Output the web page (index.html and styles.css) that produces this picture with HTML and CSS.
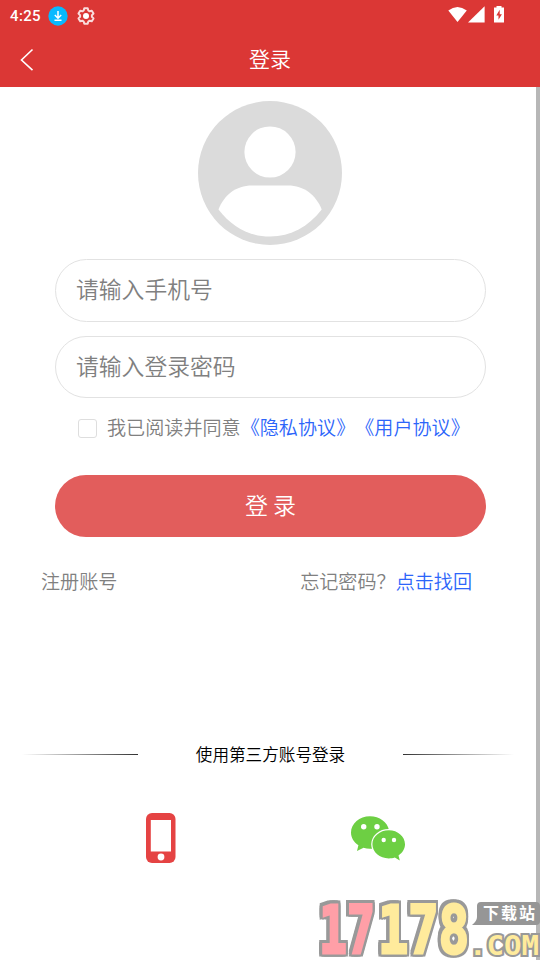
FILE: index.html
```html
<!DOCTYPE html>
<html lang="zh-CN">
<head>
<meta charset="utf-8">
<title>登录</title>
<link rel="stylesheet" href="styles.css">
</head>
<body>
<div class="screen">
  <header class="top">
    <div class="status">
      <span class="time">4:25</span>
      <svg class="download" width="20" height="20" viewBox="0 0 20 20"><circle cx="10" cy="10" r="9.700" fill="#08b9ff"/><path d="M10 5v7M6.800 9l3.200 3.200L13.200 9M6.500 14.300h7" fill="none" stroke="#fff" stroke-width="1.500"/></svg>
      <svg class="gear" width="18" height="18" viewBox="0 0 18 18"><path d="M7.300 1.300h3.400l.6 2.200 1.300.8 2.200-.6 1.700 2.900-1.600 1.600v1.600l1.600 1.600-1.700 2.900-2.200-.6-1.300.8-.6 2.200H7.300l-.6-2.200-1.300-.8-2.200.6-1.700-2.900 1.600-1.600V8.200L1.500 6.600l1.700-2.900 2.200.6 1.300-.8z" fill="none" stroke="#f9dcdc" stroke-width="2" stroke-linejoin="round"/><circle cx="9" cy="9" r="3" fill="#fff"/></svg>
      <svg class="signals" width="58" height="18" viewBox="0 0 58 18" fill="#fff"><path d="M.3 4.500Q9.500-2.500 18.800 4.500L9.500 16z"/><path d="M20 16.500 36.600.2v16.300z"/><path d="M46 1.500h2.500V0h5v1.500H56v15H46z"/><path d="M51.700 3.800 48.300 9.500h2.200v4.300l3.400-5.500h-2.200z" fill="#db3735"/></svg>
    </div>
    <div class="nav">
      <svg class="back" width="14" height="24" viewBox="0 0 14 24"><path d="M12.500 1.500 1.500 12l11 10.200" fill="none" stroke="#fff" stroke-width="1.600"/></svg>
      <h1>登录</h1>
    </div>
  </header>
  <main>
    <svg class="avatar" width="144" height="144" viewBox="0 0 144 144"><circle cx="72" cy="72" r="72" fill="#dbdbdb"/><circle cx="72" cy="51" r="25.600" fill="#fff"/><path d="M20.500 108.500C26 94 38 84.500 54 84.500h36c16 0 28 9.500 33.700 24C110 126 93 135.500 72 135.500S34 126 20.500 108.500z" fill="#fff"/></svg>
    <form class="form">
      <div class="field">请输入手机号</div>
      <div class="field second">请输入登录密码</div>
      <div class="terms"><span class="check"></span><span class="agree">我已阅读并同意<a>《隐私协议》</a><a>《用户协议》</a></span></div>
      <div class="submit">登 录</div>
    </form>
    <div class="links"><span>注册账号</span><span>忘记密码？<a>点击找回</a></span></div>
    <div class="divider"><i class="line left"></i><span>使用第三方账号登录</span><i class="line right"></i></div>
    <div class="providers">
      <svg class="phone" width="30" height="50" viewBox="0 0 30 50"><rect width="29.500" height="50" rx="6" fill="#e54343"/><path d="M4.800 7h20.200v31.500H4.800z" fill="#fff"/><circle cx="15" cy="44" r="3.400" fill="#fff"/></svg>
      <svg class="wechat" width="54" height="45" viewBox="0 0 54 45"><path d="M19 .2C8.500.2 0 7.500 0 16.500c0 5.200 2.900 9.800 7.400 12.800L6 35l6.500-3.200c2.800.9 5.500 1.200 8.500.9L38 14C36.500 6 28.500.2 19 .2z" fill="#6dcf43"/><path d="M37.800 14.200c-9.100 0-16.400 6.300-16.400 14.100s7.300 14.100 16.400 14.100c2.200 0 4-.2 6-.9l5 3-1.300-5.100c4-2.600 6.500-6.500 6.500-11.100 0-7.800-7.100-14.100-16.200-14.100z" fill="#6dcf43" stroke="#fff" stroke-width="2.400" paint-order="stroke"/><g fill="#fff"><circle cx="12.700" cy="10.800" r="2.700"/><circle cx="26" cy="10.800" r="2.700"/><circle cx="32.700" cy="24" r="2.200"/><circle cx="43" cy="24" r="2.200"/></g></svg>
    </div>
  </main>
  <div class="scrollbar"></div>
  <svg class="watermark" width="224" height="62" viewBox="0 0 224 62">
    <g class="digits">
      <text class="pink" x="3" y="55" textLength="56" lengthAdjust="spacingAndGlyphs">17</text>
      <text class="yellow" x="62" y="55" textLength="91" lengthAdjust="spacingAndGlyphs">178</text>
    </g>
    <path d="M165 4h55q4 0 4 4v15q0 4-4 4h-64q5-4 5-8V8q0-4 4-4z" fill="#969696"/>
    <text class="tag" x="167" y="21" textLength="52">下载站</text>
    <text class="com" x="153" y="57" textLength="70" lengthAdjust="spacingAndGlyphs">.COM</text>
  </svg>
</div>
</body>
</html>
```
FILE: styles.css
```css
* { box-sizing: border-box; }
body { margin: 0; background: #fff; }
.screen {
  position: relative;
  width: 540px;
  height: 960px;
  overflow: hidden;
  font-family: "Noto Sans CJK SC", sans-serif;
  font-weight: 350;
  color: #808080;
}
.top { height: 87px; background: #db3735; color: #fff; }
.status { height: 31px; display: flex; align-items: center; padding: 0 34px 0 10px; }
.time { font: 500 15px/20px Roboto, sans-serif; width: 38px; letter-spacing: .35px; padding-top: 1px; }
.gear { margin-left: 9px; }
.signals { margin-left: auto; margin-top: -1px; }
.nav { height: 56px; display: grid; grid-template-columns: 60px 1fr 60px; align-items: center; }
.back { margin-left: 20px; margin-top: 1px; }
h1 { margin: 0 0 3px; text-align: center; font-size: 21px; font-weight: 350; line-height: 30px; }
.avatar { display: block; margin: 14px auto 0 198px; }
.form { margin: 14px 54px 0 55px; }
.field {
  height: 63px;
  border: 1px solid #e2e2e2;
  border-radius: 32px;
  padding-left: 20px;
  font-size: 22.800px;
  line-height: 58px;
}
.second { height: 62px; margin-top: 14px; }
.terms { height: 20px; margin-top: 20px; padding-left: 23px; display: flex; align-items: center; font-size: 19.100px; line-height: 20px; white-space: nowrap; }
.agree { text-spacing-trim: space-all; margin-top: -2px; }
.check { width: 19px; height: 19px; border: 1px solid #dedede; border-radius: 3px; margin: 1px 10px 0 0; }
a { color: #2c65fa; }
.submit { height: 62px; margin-top: 37px; border-radius: 31px; background: #e25d5c; color: #fff; font-size: 23px; line-height: 59px; text-align: center; }
.links { display: flex; justify-content: space-between; margin-top: 31px; padding: 0 68px 0 41px; font-size: 19.100px; line-height: 27px; }
.divider { display: flex; justify-content: space-between; align-items: center; margin: 147px 26px 0 22px; height: 24px; color: #000; font-size: 16.600px; line-height: 24px; }
.line { width: 116px; height: 1px; background: linear-gradient(90deg, #fff, #333); }
.right { width: 111px; background: linear-gradient(270deg, #fff, #333); }
.providers { display: flex; justify-content: space-between; align-items: center; padding: 0 135px 0 146px; margin-top: 47px; }
.scrollbar { position: absolute; top: 87px; right: 0; bottom: 0; width: 4px; background: #b7b7b7; }
.watermark { position: absolute; right: 0; bottom: 0; }
.digits {
  font: 700 66px "DejaVu Sans Mono", monospace;
  stroke-width: 3px;
  stroke-linejoin: miter;
  filter: drop-shadow(2.500px 0 0 #999) drop-shadow(-2.500px 0 0 #999) drop-shadow(0 2.500px 0 #999) drop-shadow(0 -2.500px 0 #999);
}
.pink { fill: #ff9fa7; stroke: #ff9fa7; }
.yellow { fill: #ffeb9c; stroke: #ffeb9c; }
.tag { fill: #fff; font: 700 16px "Noto Sans CJK SC", sans-serif; }
.com { fill: #ffeb9c; stroke: #999; stroke-width: 4px; paint-order: stroke; font: 700 26px "DejaVu Sans Mono", monospace; }
```
